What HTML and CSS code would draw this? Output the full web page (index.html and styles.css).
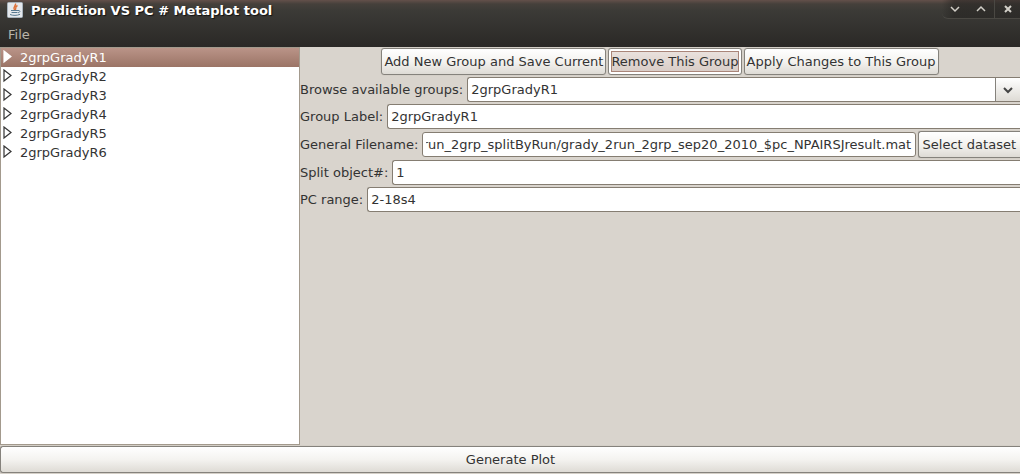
FILE: index.html
```html
<!DOCTYPE html>
<html lang="en">
<head>
<meta charset="utf-8">
<title>Prediction VS PC # Metaplot tool</title>
<link rel="stylesheet" href="styles.css">
<script src="app.js" defer></script>
</head>
<body>
<div class="window">
  <header class="chrome">
    <div class="titlebar">
      <svg class="app-icon" viewBox="0 0 16 16" aria-hidden="true">
        <rect x="0.5" y="0.5" width="15" height="15" rx="1" fill="#e4e8ec" stroke="#a9b4bd"/>
        <path d="M8.500 1.500C9.500 3.500 5.500 4.500 7.500 8M10.500 3.500C7.500 5 9.500 6 8.300 8" fill="none" stroke="#dc7038" stroke-width="1.4"/>
        <path d="M4 8.500h7M4.500 10.500h6M11 8.500c2.500-.5 2.500 2 0 2.200M3 12.500c3 1.200 7 1.200 10-.2" fill="none" stroke="#56788f"/>
      </svg>
      <h1 class="title">Prediction VS PC # Metaplot tool</h1>
      <div class="window-buttons">
        <button class="window-button" type="button" aria-label="Minimize"><svg viewBox="0 0 10 8"><path d="M1 2l4 4 4-4"/></svg></button>
        <button class="window-button" type="button" aria-label="Maximize"><svg viewBox="0 0 10 8"><path d="M1 6l4-4 4 4"/></svg></button>
        <button class="window-button close" type="button" aria-label="Close"><svg viewBox="0 0 10 8"><path d="M2 1l6 6M8 1L2 7"/></svg></button>
      </div>
    </div>
    <nav class="menubar"><button class="menu" type="button">File</button></nav>
  </header>
  <main class="content">
    <ul class="tree">
      <li class="node selected"><svg class="arrow" viewBox="0 0 9 14"><path d="M1 1v11l7-5.500z"/></svg>2grpGradyR1</li>
      <li class="node"><svg class="arrow" viewBox="0 0 9 14"><path d="M1 1v11l7-5.500z"/></svg>2grpGradyR2</li>
      <li class="node"><svg class="arrow" viewBox="0 0 9 14"><path d="M1 1v11l7-5.500z"/></svg>2grpGradyR3</li>
      <li class="node"><svg class="arrow" viewBox="0 0 9 14"><path d="M1 1v11l7-5.500z"/></svg>2grpGradyR4</li>
      <li class="node"><svg class="arrow" viewBox="0 0 9 14"><path d="M1 1v11l7-5.500z"/></svg>2grpGradyR5</li>
      <li class="node"><svg class="arrow" viewBox="0 0 9 14"><path d="M1 1v11l7-5.500z"/></svg>2grpGradyR6</li>
    </ul>
    <form class="settings">
      <div class="actions">
        <button class="button" type="button">Add New Group and Save Current</button>
        <button class="button focused" type="button">Remove This Group</button>
        <button class="button" type="button">Apply Changes to This Group</button>
      </div>
      <div class="row">
        <label for="groups">Browse available groups:</label>
        <div class="combo">
          <select class="combo-select" id="groups">
            <option selected>2grpGradyR1</option>
            <option>2grpGradyR2</option>
            <option>2grpGradyR3</option>
            <option>2grpGradyR4</option>
            <option>2grpGradyR5</option>
            <option>2grpGradyR6</option>
          </select>
          <span class="combo-arrow"><svg viewBox="0 0 10 8"><path d="M1 2l4 4 4-4"/></svg></span>
        </div>
      </div>
      <div class="row">
        <label for="group-label">Group Label:</label>
        <input class="field to-edge" id="group-label" type="text" value="2grpGradyR1">
      </div>
      <div class="row">
        <label for="filename">General Filename:</label>
        <input class="field" id="filename" type="text" value="2run_2grp_splitByRun/grady_2run_2grp_sep20_2010_$pc_NPAIRSJresult.mat">
        <button class="button dataset" type="button">Select dataset</button>
      </div>
      <div class="row">
        <label for="split">Split object#:</label>
        <input class="field to-edge" id="split" type="text" value="1">
      </div>
      <div class="row">
        <label for="range">PC range:</label>
        <input class="field to-edge" id="range" type="text" value="2-18s4">
      </div>
    </form>
  </main>
  <footer class="footer"><button class="button generate" type="button">Generate Plot</button></footer>
</div>
</body>
</html>
```
FILE: app.js
```js
// Long paths show their end, where the file name is.
const filename = document.getElementById("filename");
filename.scrollLeft = filename.scrollWidth;
```
FILE: styles.css
```css
* { box-sizing: border-box; }

body {
  margin: 0;
  background: #d9d4cd;
  color: #333;
  font: 13px/19px "DejaVu Sans", sans-serif;
}

button, input, select { font: inherit; color: inherit; margin: 0; }

.window { display: flex; flex-direction: column; min-height: 100vh; overflow: hidden; }

.chrome { background: linear-gradient(#63504a 0, #45403b 4px, #3c3b37 10px, #2a2826 100%); }

.titlebar { display: flex; align-items: flex-start; height: 24px; padding-left: 7px; }
.app-icon { width: 16px; height: 16px; margin-top: 2px; }
.title {
  flex: 1;
  margin: 1px 0 0 8px;
  color: #fff;
  font-size: 13px;
  line-height: 20px;
  text-shadow: 1px 1px 1px #111;
}

.window-buttons {
  display: flex;
  height: 19px;
  background: linear-gradient(90deg, transparent, #24222088 12px);
  border-bottom: 1px solid #4a4843;
  border-radius: 0 0 0 6px;
}
.window-button {
  display: grid;
  place-items: center;
  width: 26px;
  padding: 0;
  border: 0;
  background: none;
}
.window-button svg { width: 10px; height: 8px; fill: none; stroke: #d2cfc8; stroke-width: 1.5; }
.window-button.close { border-left: 1px solid #4a4843; }
.window-button.close svg { stroke-width: 2; }

.menubar { height: 23px; padding-left: 8px; }
.menu { display: block; padding: 1px 0; border: 0; background: none; color: #bab5ab; }

.content { flex: 1; display: grid; grid-template-columns: 300px minmax(0, 1fr); }

.tree { margin: 0; padding: 0; list-style: none; background: #fff; border: 1px solid #a39a8d; }
.node { display: flex; align-items: flex-start; gap: 8px; padding-left: 2px; }
.selected { color: #fff; background: linear-gradient(#ba9488, #9b7466); }
.arrow { width: 9px; height: 14px; margin-top: 2px; fill: #fff; stroke: #333; stroke-width: 1.2; }
.selected .arrow { stroke: #fff; }

.settings { display: flex; flex-direction: column; gap: 2px; padding-top: 1px; }
.actions { display: flex; justify-content: center; gap: 2px; }
.actions .button { padding: 0 2px; }
.row { display: flex; align-items: center; gap: 4px; }
.row label { white-space: nowrap; }

.button {
  height: 27px;
  padding: 0 4px;
  border: 1px solid #85827c;
  border-radius: 3px;
  background: linear-gradient(#fff, #f4f3f0 50%, #dedbd5);
  box-shadow: 0 0 1px #aaa59c;
  white-space: nowrap;
}
.actions .focused {
  padding: 2px;
  outline: 1px solid #a98579;
  outline-offset: -4px;
  background: linear-gradient(#eae2de, #d8ccc6) content-box, #fff;
}

.field, .combo {
  flex: 1;
  min-width: 0;
  height: 25px;
  border: 1px solid #857d72;
  border-radius: 3px;
  background: #fff;
}
.field { padding: 0 3px; }
.to-edge { border-right: 0; border-radius: 3px 0 0 3px; }
.dataset { margin-left: -2px; border-right: 0; border-radius: 3px 0 0 3px; }

.combo { display: grid; grid-template-columns: minmax(0, 1fr) 25px; border-right: 0; border-radius: 3px 0 0 3px; }
.combo-select {
  grid-area: 1 / 1 / 2 / 3;
  appearance: none;
  padding: 0 3px;
  border: 0;
  background: none;
}
.combo-arrow {
  grid-area: 1 / 2;
  display: grid;
  place-items: center;
  border-left: 1px solid #85827c;
  background: linear-gradient(#fff, #dedbd5);
  pointer-events: none;
}
.combo-arrow svg { width: 10px; height: 8px; fill: none; stroke: #444; stroke-width: 2; }

.footer { padding: 1px 0; }
.generate { display: block; width: 100%; border-right: 0; border-radius: 3px 0 0 3px; }
```
